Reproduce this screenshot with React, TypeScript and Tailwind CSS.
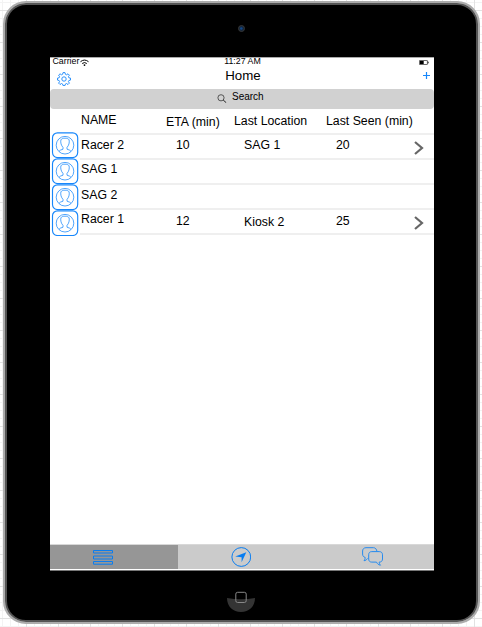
import React from "react";

type Cell = { text: string; offset: string };
type Row = { cells: Cell[]; more: boolean };

const rows: Row[] = [
  { cells: [{ text: "Racer 2", offset: "pt-[3px]" }, { text: "10", offset: "pt-[3px]" }, { text: "SAG 1", offset: "pt-[3px]" }, { text: "20", offset: "pt-[3px]" }], more: true },
  { cells: [{ text: "SAG 1", offset: "pt-[2px]" }], more: false },
  { cells: [{ text: "SAG 2", offset: "pt-[3px]" }], more: false },
  { cells: [{ text: "Racer 1", offset: "pt-[2px]" }, { text: "12", offset: "pt-[4px]" }, { text: "Kiosk 2", offset: "pt-[5px]" }, { text: "25", offset: "pt-[4px]" }], more: true },
];

function Avatar() {
  return (
    <svg className="block h-[26px] w-[28px]" viewBox="0 0 28 26" fill="none" stroke="#1787fb">
      <rect x="1.5" y="0.8" width="25.2" height="24.7" rx="5" strokeWidth="1.15" />
      <circle cx="14" cy="13.2" r="8.8" strokeWidth="0.75" />
      <path d="M8 19.4Q8.8 18 12 17.2V15.4C10.2 13.6 9.3 10.4 9.9 7.9C10.9 5.6 17.1 5.6 18.1 7.9C18.7 10.4 17.8 13.6 16 15.4V17.2Q19.2 18 20 19.4" strokeWidth="0.75" />
    </svg>
  );
}

function Gear() {
  return (
    <svg className="block h-[14px] w-[14px]" viewBox="0 0 14 14" fill="none" stroke="#1787fb" strokeWidth="0.9">
      <path d="M6 .6h2l.4 1.7 1.1.5 1.5-1 1.4 1.4-1 1.5.5 1.1 1.6.3v2l-1.6.4-.5 1.1 1 1.5-1.4 1.4-1.5-1-1.1.5-.4 1.6H6l-.4-1.6-1.1-.5-1.5 1-1.4-1.4 1-1.5-.5-1.1-1.6-.4v-2l1.6-.3.5-1.1-1-1.5L3 1.8l1.5 1 1.1-.5z" />
      <circle cx="7" cy="7" r="2.2" />
    </svg>
  );
}

function Grid() {
  return (
    <svg className="absolute inset-0 h-full w-full">
      <defs>
        <pattern id="minor" x="2" y="2" width="8" height="8" patternUnits="userSpaceOnUse">
          <path d="M.5 0V8M0 .5H8" stroke="#f3f3f3" />
        </pattern>
        <pattern id="major" x="26" y="10" width="32" height="32" patternUnits="userSpaceOnUse">
          <path d="M.5 0V32M0 .5H32" stroke="#e2e2e2" />
        </pattern>
      </defs>
      <rect width="482" height="627" fill="url(#minor)" />
      <rect width="482" height="627" fill="url(#major)" />
    </svg>
  );
}

export default function App() {
  return (
    <div className="relative h-[627px] w-[482px] overflow-hidden bg-white pl-[3px] pt-px font-['Liberation_Sans',Arial,sans-serif] text-black">
      <Grid />
      <div className="relative h-[623px] w-[477px] rounded-[23px] border-2 border-[#acacac]">
        <div className="flex h-full flex-col items-center rounded-[21px] border-2 border-[#555] bg-black">
          <div className="flex h-[52px] w-full shrink-0 justify-center pt-[20px]">
            <svg className="h-[7px] w-[7px]" viewBox="0 0 7 7">
              <circle cx="3.5" cy="3.5" r="3" fill="#14253a" stroke="#363636" />
              <circle cx="3.3" cy="3.5" r="1.3" fill="#11488b" />
            </svg>
          </div>
          <div className="ml-[43px] flex h-[514px] w-[384px] shrink-0 flex-col self-start border-b border-[#777] bg-white">
            <div className="grid h-[9px] shrink-0 grid-cols-[1fr_auto_1fr] border-t border-[#aaa] text-[8.8px] leading-[8px]">
              <div className="flex pl-[2.5px]">
                <span className="-mt-px">Carrier</span>
                <svg className="ml-[1px] mt-[1px] h-[8px] w-[9px]" viewBox="0 0 9 8" fill="none" stroke="#000">
                  <path d="M.5 2.7Q4.5-.6 8.5 2.7M2.2 4.5Q4.5 2.6 6.8 4.5" strokeWidth="1" />
                  <circle cx="4.5" cy="6.1" r=".9" fill="#000" stroke="none" />
                </svg>
              </div>
              <span className="-mt-px pl-px">11:27 AM</span>
              <div className="flex justify-end pr-[5px] pt-[2px]">
                <svg className="h-[5px] w-[10px]" viewBox="0 0 10 5">
                  <rect x=".4" y=".4" width="8" height="4.2" rx=".5" fill="white" stroke="#333" strokeWidth=".8" />
                  <path d="M1 1h3.7v3H1z" />
                  <path d="M9.2 1.7v1.6" stroke="#333" />
                </svg>
              </div>
            </div>
            <div className="grid h-[23px] shrink-0 grid-cols-[1fr_auto_1fr]">
              <div className="pl-[7px] pt-[6px]"><Gear /></div>
              <h1 className="pl-[2px] pt-[2px] text-[13.3px] leading-[15px]">Home</h1>
              <div className="flex justify-end pr-[4px] pt-[6px]">
                <svg className="h-[7px] w-[7px]" viewBox="0 0 7 7" stroke="#1787fb" strokeWidth="1.2"><path d="M3.5 0v7M0 3.5h7" /></svg>
              </div>
            </div>
            <div className="flex h-5 shrink-0 rounded-[4px] bg-[#d1d1d1] pl-[167px]">
              <svg className="mt-[5px] h-[9px] w-[10px]" viewBox="0 0 10 9" fill="none" stroke="#222">
                <circle cx="4" cy="3.8" r="3.1" strokeWidth=".7" /><path d="M6.2 6L9.2 8.7" strokeWidth="1" />
              </svg>
              <span className="ml-[5px] pt-[2px] text-[10px] leading-[12px]">Search</span>
            </div>
            <div className="flex flex-1 text-[12.3px] leading-[14px]">
              <div className="w-[30px] pl-px pt-[23px]">
                {rows.map((_, i) => <Avatar key={i} />)}
              </div>
              <div className="w-[354px]">
                <div className="grid h-[26px] grid-cols-[85px_68px_92px_1fr] whitespace-nowrap border-b-2 border-[#efefef] pl-px">
                  <span className="pt-[4px]">NAME</span>
                  <span className="pt-[6px]">ETA (min)</span>
                  <span className="pt-[5px]">Last Location</span>
                  <span className="pt-[5px]">Last Seen (min)</span>
                </div>
                {rows.map((row, i) => (
                  <div key={i} className="grid h-[25px] grid-cols-[95px_68px_92px_78px_1fr] border-b-2 border-[#efefef] pl-px">
                    {row.cells.map((cell, j) => <span key={j} className={cell.offset}>{cell.text}</span>)}
                    {row.more && (
                      <svg className="-ml-[0.5px] mt-[6px] h-[14px] w-[10px]" viewBox="0 0 10 14" fill="none" stroke="#666" strokeWidth="2.2">
                        <path d="M1 1L8 7L1 13" />
                      </svg>
                    )}
                  </div>
                ))}
              </div>
            </div>
            <nav className="mb-px grid h-[25px] shrink-0 grid-cols-3 border-t border-[#d8d8d8] bg-[#cbcbcb]">
              <div className="bg-[#969696] pl-[43px] pt-[4px]">
                <svg className="h-[16px] w-[20px]" viewBox="0 0 20 16" fill="none" stroke="#087df1">
                  <path d="M.5 1.5h19V4H.5zM.5 7h19v3H.5zM.5 12.5h19v2.7H.5z" />
                </svg>
              </div>
              <div className="pl-[53px] pt-[2px]">
                <svg className="h-[20px] w-[20px]" viewBox="0 0 20 20" fill="none" stroke="#087df1">
                  <circle cx="10.3" cy="10" r="9.4" /><path d="M15.3 5.3L10.6 15.2V10.2L4.2 9.5Z" fill="#087df1" stroke="none" />
                </svg>
              </div>
              <div className="pl-[56px] pt-[2px]">
                <svg className="h-[20px] w-[21px]" viewBox="0 0 21 20" fill="none" stroke="#268bef" strokeWidth="1">
                  <path d="M15 4.5C14.5 2.2 13.5.7 11.5.7H4C1.8.7.6 2.2.6 4V7c0 2 1 3.1 2.5 3.3C3.2 11.5 3 12.7 2 13.7C3.6 13.7 4.6 12.8 5.5 11.4" />
                  <path d="M9.8 4.6H17.2C19.3 4.6 20.5 5.7 20.5 7.8V12c0 2-1.2 3.1-3.3 3.1c0 1.2.3 2.2 1.3 3.1c-1.8-.2-3.1-1.2-4-3.1H9.8c-2 0-3.1-1.1-3.1-3.1V7.8c0-2.1 1.1-3.2 3.1-3.2Z" />
                </svg>
              </div>
            </nav>
          </div>
          <svg className="mr-[2px] mt-[20px] h-[22px] w-[28px] shrink-0" viewBox="0 0 28 22" fill="none">
            <path d="M0 7Q14 9.5 28 7C28 15.5 22 21 14 21S0 15.5 0 7Z" fill="#343434" />
            <rect x="8.8" y="1.3" width="10.4" height="10.2" rx="1.8" stroke="#888" />
          </svg>
        </div>
      </div>
    </div>
  );
}
